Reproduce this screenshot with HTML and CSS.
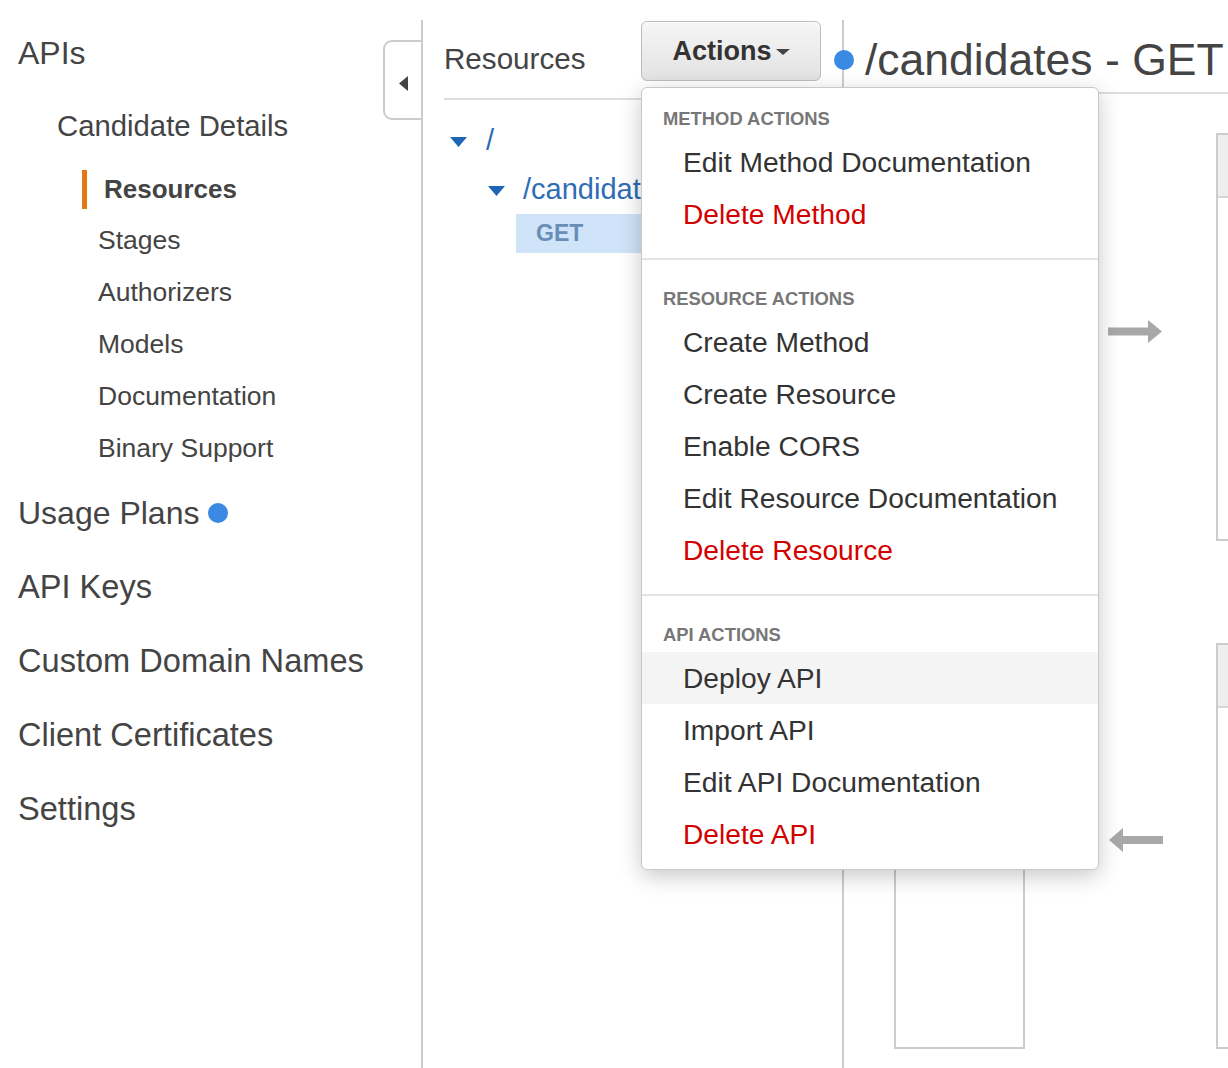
FILE: index.html
```html
<!DOCTYPE html>
<html lang="en">
<head>
<meta charset="utf-8">
<title>API Gateway - Resources</title>
<link rel="stylesheet" href="styles.css">
</head>
<body>
<div class="app">
  <aside class="sidebar">
    <div class="nav-title">APIs</div>
    <div class="nav-api">Candidate Details</div>
    <ul class="subnav">
      <li class="sub-item active"><span class="active-bar"></span><span>Resources</span></li>
      <li class="sub-item">Stages</li>
      <li class="sub-item">Authorizers</li>
      <li class="sub-item">Models</li>
      <li class="sub-item">Documentation</li>
      <li class="sub-item">Binary Support</li>
    </ul>
    <ul class="topnav">
      <li class="top-item"><span class="usage-label">Usage Plans</span><span class="dot"></span></li>
      <li class="top-item">API Keys</li>
      <li class="top-item">Custom Domain Names</li>
      <li class="top-item">Client Certificates</li>
      <li class="top-item">Settings</li>
    </ul>
    <button class="collapse-tab" aria-label="Collapse">
      <svg width="9" height="15" viewBox="0 0 9 15"><polygon points="9,0 0,7.5 9,15" fill="#444"/></svg>
    </button>
  </aside>

  <section class="resources-panel">
    <header class="panel-header">
      <h2 class="panel-title">Resources</h2>
      <div class="actions">
        <button class="actions-btn">Actions<span class="caret"></span></button>
        <div class="menu">
          <div class="menu-section">
            <div class="menu-heading">METHOD ACTIONS</div>
            <a class="menu-item">Edit Method Documentation</a>
            <a class="menu-item danger">Delete Method</a>
          </div>
          <div class="menu-section">
            <div class="menu-heading">RESOURCE ACTIONS</div>
            <a class="menu-item">Create Method</a>
            <a class="menu-item">Create Resource</a>
            <a class="menu-item">Enable CORS</a>
            <a class="menu-item">Edit Resource Documentation</a>
            <a class="menu-item danger">Delete Resource</a>
          </div>
          <div class="menu-section">
            <div class="menu-heading">API ACTIONS</div>
            <a class="menu-item hover">Deploy API</a>
            <a class="menu-item">Import API</a>
            <a class="menu-item">Edit API Documentation</a>
            <a class="menu-item danger">Delete API</a>
          </div>
        </div>
      </div>
    </header>
    <div class="tree">
      <div class="tree-row root">
        <svg class="tri" viewBox="0 0 17 10"><polygon points="0,0 17,0 8.5,10" fill="#1f65b5"/></svg>
        <span>/</span>
      </div>
      <div class="tree-row child">
        <svg class="tri" viewBox="0 0 17 10"><polygon points="0,0 17,0 8.5,10" fill="#1f65b5"/></svg>
        <span>/candidates</span>
      </div>
      <div class="tree-method">GET</div>
    </div>
  </section>

  <section class="method-panel">
    <header class="method-header">
      <span class="dot"></span>
      <h1 class="method-title">/candidates - GET</h1>
    </header>
    <div class="diagram">
      <div class="node client"></div>
      <div class="node method-request"><div class="node-head"></div></div>
      <div class="node method-response"><div class="node-head"></div></div>
      <svg class="arrow arrow-right" viewBox="0 0 54 23"><rect x="0" y="7.5" width="41" height="8" fill="#a8a8a8"/><polygon points="40,0 54,11.5 40,23" fill="#a8a8a8"/></svg>
      <svg class="arrow arrow-left" viewBox="0 0 54 24"><polygon points="14,0 0,12 14,24" fill="#a8a8a8"/><rect x="13" y="8" width="41" height="8" fill="#a8a8a8"/></svg>
    </div>
  </section>
</div>
</body>
</html>
```

FILE: styles.css
```css
* { box-sizing: border-box; }
html, body { margin: 0; padding: 0; overflow: hidden; }
body {
  font-family: "Liberation Sans", Arial, Helvetica, sans-serif;
  color: #444;
  background: #fff;
}
.app { display: flex; width: 1228px; height: 1068px; }

/* Sidebar */
.sidebar { width: 421px; flex: none; position: relative; padding-top: 16px; }
.nav-title { height: 74px; line-height: 74px; font-size: 32px; padding-left: 18px; }
.nav-api { margin-top: 16px; line-height: 40px; font-size: 29.3px; padding-left: 57px; }
.subnav { list-style: none; margin: 18px 0 0; padding: 0; }
.sub-item { height: 52px; line-height: 52px; font-size: 26.5px; padding-left: 98px; }
.sub-item.active {
  height: 50px; display: flex; align-items: center;
  padding-left: 82px; font-weight: bold; font-size: 26px;
}
.active-bar { width: 5px; height: 39px; background: #e47911; margin-right: 17px; flex: none; }
.topnav { list-style: none; margin: 2px 0 0; padding: 0; }
.top-item { height: 74px; display: flex; align-items: center; font-size: 32.6px; padding-left: 18px; }
.usage-label { font-size: 32px; }
.dot { width: 20px; height: 20px; border-radius: 50%; background: #3a89e3; flex: none; display: inline-block; }
.top-item .dot { margin-left: 9px; }
.collapse-tab {
  position: absolute; right: 0; top: 40px;
  width: 38px; height: 80px; padding: 6px 0 0;
  border: 2px solid #ccc; border-right: 0; border-radius: 9px 0 0 9px;
  background: #fff; display: flex; align-items: center; justify-content: center;
}

/* Resources panel */
.resources-panel { width: 421px; flex: none; margin-top: 20px; border-left: 2px solid #ccc; }
.panel-header {
  margin: 0 21px; height: 80px; border-bottom: 2px solid #ddd;
  display: flex; justify-content: space-between; align-items: center;
}
.panel-title { margin: 0; font-size: 29.6px; font-weight: normal; color: #444; }
.actions { align-self: flex-start; margin-top: 1px; position: relative; }
.actions-btn {
  width: 180px; height: 60px; padding: 0;
  font: inherit; font-size: 27px; font-weight: bold; color: #333;
  border: 1px solid #bdbdbd; border-radius: 6px;
  background: linear-gradient(#f6f6f6, #e2e2e2);
  box-shadow: inset 0 1px 0 #fff;
  display: flex; align-items: center; justify-content: center;
}
.caret {
  width: 0; height: 0; margin-left: 4px; margin-top: 2px;
  border-left: 7px solid transparent; border-right: 7px solid transparent;
  border-top: 6px solid #444;
}
.menu {
  position: absolute; top: calc(100% + 6px); left: 0; z-index: 10;
  width: 458px; background: #fff;
  border: 1px solid #c9c9c9; border-radius: 6px;
  box-shadow: 0 6px 22px rgba(0, 0, 0, 0.22);
}
.menu-section { padding: 29px 0 18px; border-top: 2px solid #e4e4e4; }
.menu-section:first-child { padding-top: 21px; border-top: 0; }
.menu-section:last-child { padding-bottom: 9px; }
.menu-heading {
  font-size: 18.4px; line-height: 20px; font-weight: bold; color: #777;
  padding-left: 21px; margin-bottom: 7px;
}
.menu-item {
  display: block; height: 52px; line-height: 52px;
  font-size: 28.2px; color: #333; padding-left: 41px; text-decoration: none;
}
.menu-item.danger { color: #d40000; }
.menu-item.hover { background: #f4f4f4; }

.tree { margin-left: 21px; }
.tree-row { display: flex; align-items: center; height: 40px; font-size: 29px; color: #2e6db5; white-space: nowrap; }
.tree-row.root { margin-top: 20px; }
.tree-row.root .tri { margin-left: 6px; margin-right: 19px; }
.tree-row.child { margin-top: 9px; }
.tree-row.child .tri { margin-left: 44px; margin-right: 18px; }
.tri { width: 17px; height: 10px; flex: none; margin-top: 3px; }
.tree-method {
  margin: 5px 0 0 72px; height: 39px; line-height: 39px; padding-left: 20px;
  background: #cfe4f8; color: #6a8db8; font-weight: bold; font-size: 23px;
}

/* Method panel */
.method-panel {
  flex: 1; min-width: 0; margin-top: 20px; border-left: 2px solid #ccc;
  display: flex; flex-direction: column;
}
.method-header { display: flex; align-items: center; padding: 15px 0 7px; border-bottom: 2px solid #ddd; }
.method-header .dot { margin-left: -10px; }
.method-title { margin: 0 0 0 11px; font-size: 44.5px; line-height: 50px; font-weight: normal; color: #444; white-space: nowrap; }
.diagram { position: relative; flex: 1; overflow: hidden; }
.node { position: absolute; border: 2px solid #ccc; background: #fff; }
.client { left: 50px; top: 41px; width: 131px; height: 914px; }
.method-request { left: 372px; top: 39px; width: 240px; height: 408px; }
.method-response { left: 372px; top: 549px; width: 240px; height: 406px; }
.node-head { height: 63px; background: #eee; border-bottom: 2px solid #d6d6d6; }
.arrow { position: absolute; }
.arrow-right { left: 264px; top: 226px; width: 54px; height: 23px; }
.arrow-left { left: 265px; top: 734px; width: 54px; height: 24px; }
```
